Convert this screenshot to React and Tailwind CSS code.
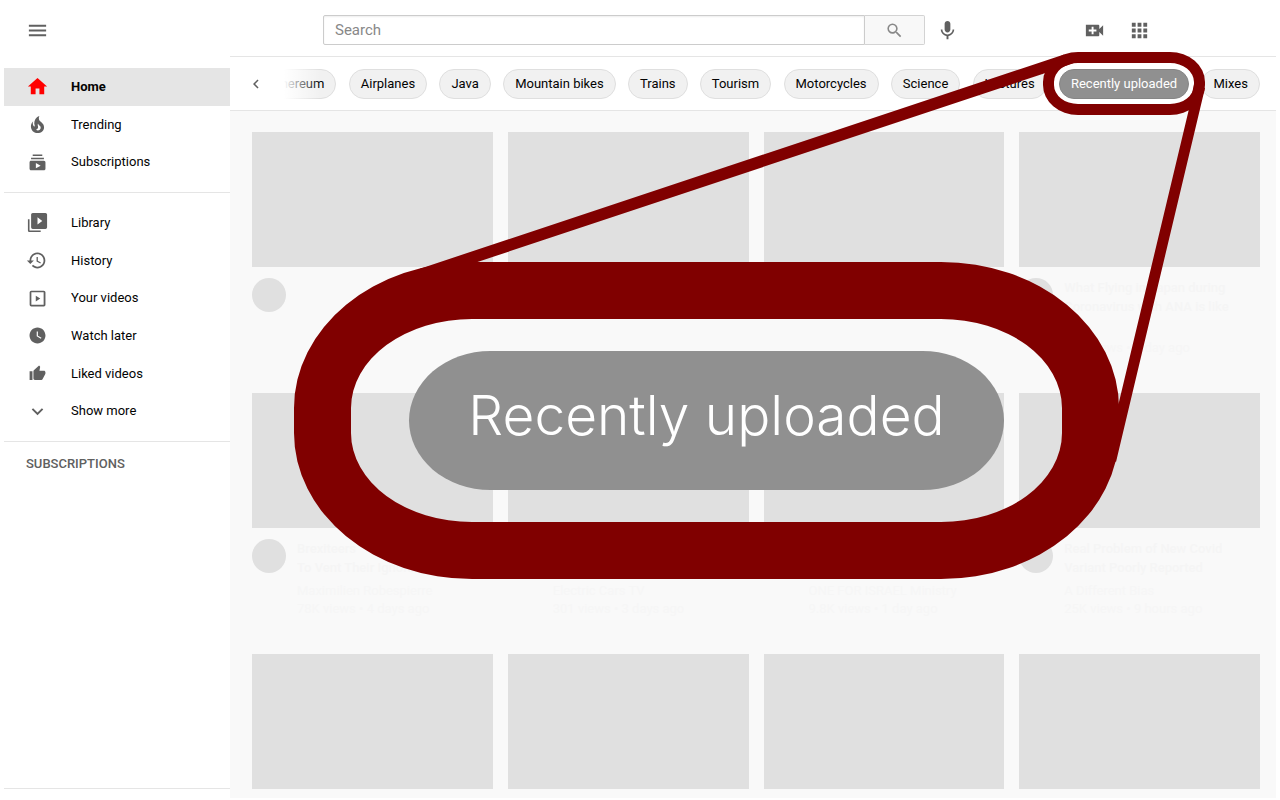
import { MdMenu, MdHome, MdExpandMore, MdSearch, MdMic, MdApps, MdChevronLeft } from "react-icons/md";

const icons = {
  trending:
    "M17.53 11.2c-.23-.3-.5-.56-.76-.82-.65-.6-1.4-1.03-2.03-1.66C13.3 7.26 13 4.85 13.91 3c-.91.23-1.75.75-2.45 1.32-2.54 2.08-3.54 5.75-2.34 8.9.04.1.08.2.08.33 0 .22-.15.42-.35.5-.22.1-.46.04-.64-.12-.06-.05-.1-.1-.15-.17-1.1-1.43-1.28-3.48-.53-5.12C5.89 10 5 12.3 5.14 14.47c.04.5.1 1 .27 1.5.14.6.4 1.2.72 1.73 1.04 1.73 2.87 2.97 4.84 3.22 2.1.27 4.35-.12 5.96-1.6 1.8-1.66 2.45-4.32 1.5-6.6l-.13-.26c-.2-.46-.47-.87-.8-1.25zm-3.1 6.3c-.28.24-.73.5-1.08.6-1.1.4-2.2-.16-2.87-.82 1.19-.28 1.89-1.16 2.09-2.05.17-.8-.14-1.46-.27-2.23-.12-.74-.1-1.37.2-2.06.15.38.35.76.58 1.06.76 1 1.95 1.44 2.2 2.8.04.14.06.28.06.43.03.82-.32 1.72-.92 2.26z",
  subscriptions:
    "M18.7 8.7H5.3V7h13.4v1.7zm-1.7-5H7v1.6h10V3.7zm3.3 8.3v6.6c0 1-.7 1.6-1.6 1.6H5.3c-1 0-1.6-.7-1.6-1.6V12c0-1 .7-1.7 1.6-1.7h13.4c1 0 1.6.8 1.6 1.7zm-5 3.3l-5-2.7v5.4l5-2.7z",
  library:
    "M3.67 8.67H2v11.66C2 21.25 2.75 22 3.67 22h11.66v-1.67H3.67V8.67zM20.33 2H7c-.92 0-1.67.75-1.67 1.67V17c0 .92.75 1.67 1.67 1.67h13.33c.92 0 1.67-.75 1.67-1.67V3.67C22 2.75 21.25 2 20.33 2zM12 14.08v-7.5l5 3.75-5 3.75z",
  history:
    "M11.9 3.75c-4.55 0-8.23 3.7-8.23 8.25H.92l3.57 3.57.04.13 3.7-3.7H5.5c0-3.54 2.87-6.42 6.42-6.42 3.54 0 6.4 2.88 6.4 6.42s-2.86 6.42-6.4 6.42c-1.78 0-3.38-.73-4.54-1.9l-1.3 1.3c1.5 1.5 3.55 2.43 5.83 2.43 4.58 0 8.28-3.7 8.28-8.25 0-4.56-3.7-8.25-8.29-8.25zM11 8.33v4.6l3.92 2.3.66-1.1-3.2-1.9v-3.9H11z",
  videos:
    "M18.4 5.6v12.8H5.6V5.6h12.8zm0-1.8H5.6a1.8 1.8 0 0 0-1.8 1.8v12.8a1.8 1.8 0 0 0 1.8 1.9h12.8a1.8 1.8 0 0 0 1.9-1.9V5.6a1.8 1.8 0 0 0-1.9-1.8zM10.2 9v6l4.7-3z",
  watchLater:
    "M12 3.67c-4.58 0-8.33 3.75-8.33 8.33s3.75 8.33 8.33 8.33 8.33-3.75 8.33-8.33S16.58 3.67 12 3.67zm3.5 11.83l-4.33-2.67v-5h1.25v4.34l3.75 2.25-.67 1.08z",
  liked:
    "M3.75 18.75h3v-9h-3v9zm16.5-8.25c0-.83-.68-1.5-1.5-1.5h-4.73l.7-3.43.03-.24c0-.3-.13-.6-.33-.8l-.8-.78L8.2 8.7c-.28.26-.45.64-.45 1.05v7.5c0 .82.67 1.5 1.5 1.5H16c.62 0 1.15-.38 1.38-.92l2.76-5.3c.07-.17.11-.35.11-.54V10.500z",
  create:
    "M17 10.500V7a1 1 0 0 0-1-1H3v12h13a1 1 0 0 0 1-1v-3.500l4 4v-11l-4 4zM14 13h-3v3H9v-3H6v-2h3V8h2v3h3v2z",
};

function Glyph({ name, className }) {
  return (
    <svg viewBox="0 0 24 24" className={className} fill="currentColor" aria-hidden="true">
      <path d={icons[name]} />
    </svg>
  );
}

const primary = [
  { label: "Home", icon: MdHome, active: true },
  { label: "Trending", glyph: "trending" },
  { label: "Subscriptions", glyph: "subscriptions" },
];

const library = [
  { label: "Library", glyph: "library" },
  { label: "History", glyph: "history" },
  { label: "Your videos", glyph: "videos" },
  { label: "Watch later", glyph: "watchLater" },
  { label: "Liked videos", glyph: "liked" },
  { label: "Show more", icon: MdExpandMore },
];

const chips = [
  "Ethereum", "Airplanes", "Java", "Mountain bikes", "Trains", "Tourism",
  "Motorcycles", "Science", "Lectures", "Recently uploaded", "Mixes",
];

const videos = [
  { id: 1 },
  { id: 2 },
  { id: 3 },
  {
    id: 4,
    title: ["What Flying in Japan during", "Coronavirus with ANA is like"],
    meta: ["", "27K views • 1 day ago"],
  },
  {
    id: 5,
    title: ["Brexiteers", "To Vent Their Ignorance"],
    meta: ["Maximilien Robespierre", "78K views • 4 days ago"],
  },
  { id: 6, title: ["", ""], meta: ["Electric Cars TV", "301 views • 3 days ago"] },
  { id: 7, title: ["", ""], meta: ["ONE FOR ISRAEL Ministry", "9.8K views • 1 day ago"] },
  {
    id: 8,
    title: ["Real Problem of New Covid", "Variant Poorly Reported"],
    meta: ["A Different Bias", "25K views • 9 hours ago"],
  },
  { id: 9 },
  { id: 10 },
  { id: 11 },
  { id: 12 },
];

function NavItem({ label, icon: Icon, glyph, active }) {
  const tone = active ? "size-[23px] text-[#ff0000]" : "size-[23px] text-[#606060]";
  return (
    <li className="flex">
      <a
        href="#"
        className={
          active
            ? "flex flex-1 items-center gap-[22px] bg-[#e5e5e5] pl-[22px] font-bold"
            : "flex flex-1 items-center gap-[22px] pl-[22px]"
        }
      >
        {Icon ? <Icon className={tone} /> : <Glyph name={glyph} className={tone} />}
        <span>{label}</span>
      </a>
    </li>
  );
}

function Sidebar() {
  return (
    <nav className="flex w-[226px] shrink-0 flex-col pt-[11px] text-[13px] text-[#030303]">
      <ul className="grid h-[113px] auto-rows-fr">
        {primary.map((item) => <NavItem key={item.label} {...item} />)}
      </ul>
      <ul className="mt-[11px] grid h-[250px] auto-rows-fr border-y border-[#e5e5e5] py-[11px]">
        {library.map((item) => <NavItem key={item.label} {...item} />)}
      </ul>
      <h2 className="mt-3 pl-[22px] leading-5 font-medium text-[#606060]">SUBSCRIPTIONS</h2>
      <div className="mt-auto h-3 border-t border-[#e5e5e5]" />
    </nav>
  );
}

function Header() {
  return (
    <header className="flex h-[57px] items-center pt-[3px] pr-[129px] pl-[22px]">
      <button type="button" aria-label="Menu" className="mr-[274px] text-[#606060]">
        <MdMenu className="size-[23px]" />
      </button>
      <form className="flex h-[30px] min-w-0 flex-1" onSubmit={(e) => e.preventDefault()}>
        <input
          type="text"
          aria-label="Search"
          placeholder="Search"
          className="min-w-0 flex-1 rounded-l-xs border border-[#cccccc] px-[11px] text-[15px] shadow-[inset_0_1px_2px_#eeeeee] outline-none placeholder:text-[#888888]"
        />
        <button
          type="submit"
          aria-label="Submit search"
          className="flex w-[60px] items-center justify-center rounded-r-xs border border-l-0 border-[#d3d3d3] bg-[#f8f8f8] text-[#888888]"
        >
          <MdSearch className="size-[19px]" />
        </button>
      </form>
      <button type="button" aria-label="Search by voice" className="ml-[11px] text-[#606060]">
        <MdMic className="size-[23px]" />
      </button>
      <button type="button" aria-label="Create" className="ml-[124px] text-[#606060]">
        <Glyph name="create" className="size-[23px]" />
      </button>
      <button type="button" aria-label="Apps" className="ml-[22px] text-[#606060]">
        <MdApps className="size-[23px]" />
      </button>
    </header>
  );
}

function ChipBar() {
  return (
    <div className="relative flex h-[55px] items-center justify-between overflow-hidden border-y border-[#e5e5e5] bg-white pr-4 pl-[27px]">
      {chips.map((chip) => (
        <button
          key={chip}
          type="button"
          className={
            chip === "Recently uploaded"
              ? "h-[30px] shrink-0 rounded-full border border-[#868686] bg-[#909090] px-[11px] text-[13px] text-white"
              : "h-[30px] shrink-0 rounded-full border border-[#dfdfdf] bg-[#f1f1f1] px-[11px] text-[13px] text-[#030303]"
          }
        >
          {chip}
        </button>
      ))}
      <div className="absolute inset-y-0 left-0 flex w-[90px] items-center bg-linear-to-r from-white from-60% to-transparent pl-[17px]">
        <button type="button" aria-label="Previous topics" className="text-[#606060]">
          <MdChevronLeft className="size-[18px]" />
        </button>
      </div>
    </div>
  );
}

function VideoCard({ title = [], meta = [] }) {
  return (
    <article className="flex h-[246px] flex-col gap-[11px]">
      <div className="aspect-video bg-[#e0e0e0]" />
      <div className="flex gap-[11px]">
        <div className="size-[34px] shrink-0 rounded-full bg-[#e0e0e0]" />
        <div className="min-w-0 text-[13px]">
          <div className="font-medium text-[#f5f5f5]">
            {title.map((line, i) => (
              <p key={i} className="h-[19px] truncate leading-[19px]">{line}</p>
            ))}
          </div>
          <div className="mt-[5px] text-[#f6f6f6]">
            {meta.map((line, i) => (
              <p key={i} className="h-[18px] truncate leading-[18px]">{line}</p>
            ))}
          </div>
        </div>
      </div>
    </article>
  );
}

function Callout() {
  return (
    <div className="pointer-events-none absolute inset-0">
      <svg className="absolute top-0 left-0 h-[600px] w-[1280px]" viewBox="0 0 1280 600" fill="#800000" aria-hidden="true">
        <path d="M420 268.700 1064 54.500 1074 63 1044 73.500 476 262.500 440 290zM1205 88 1116 462 1100 450 1119 402 1188.500 111 1194 84z" />
      </svg>
      <div className="absolute top-[52px] left-[1043px] h-[63px] w-[162px] rounded-[35px/30px] border-[11px] border-[#800000]" />
      <div className="absolute top-[262px] left-[294px] flex h-[317px] w-[825px] items-center justify-center rounded-[178px/146px] border-[57px] border-[#800000]">
        <div className="flex h-[139px] w-[595px] items-center justify-center rounded-[82px/70px] bg-[#909090] pb-2.5 font-[Inter] text-[55px] font-light text-white">
          Recently uploaded
        </div>
      </div>
    </div>
  );
}

export default function App() {
  return (
    <div className="relative flex min-h-screen flex-col bg-white pl-1 font-[Roboto,sans-serif]">
      <Header />
      <div className="flex flex-1">
        <Sidebar />
        <main className="mr-1 mb-0.5 -mt-px min-w-0 flex-1 bg-[#f9f9f9]">
          <ChipBar />
          <div className="grid grid-cols-4 gap-[15px] pt-[21px] pr-4 pl-[22px]">
            {videos.slice(0, 8).map((video) => <VideoCard key={video.id} {...video} />)}
            {videos.slice(8).map((video) => (
              <div key={video.id} className="pb-2">
                <div className="aspect-video bg-[#e0e0e0]" />
              </div>
            ))}
          </div>
        </main>
      </div>
      <Callout />
    </div>
  );
}
